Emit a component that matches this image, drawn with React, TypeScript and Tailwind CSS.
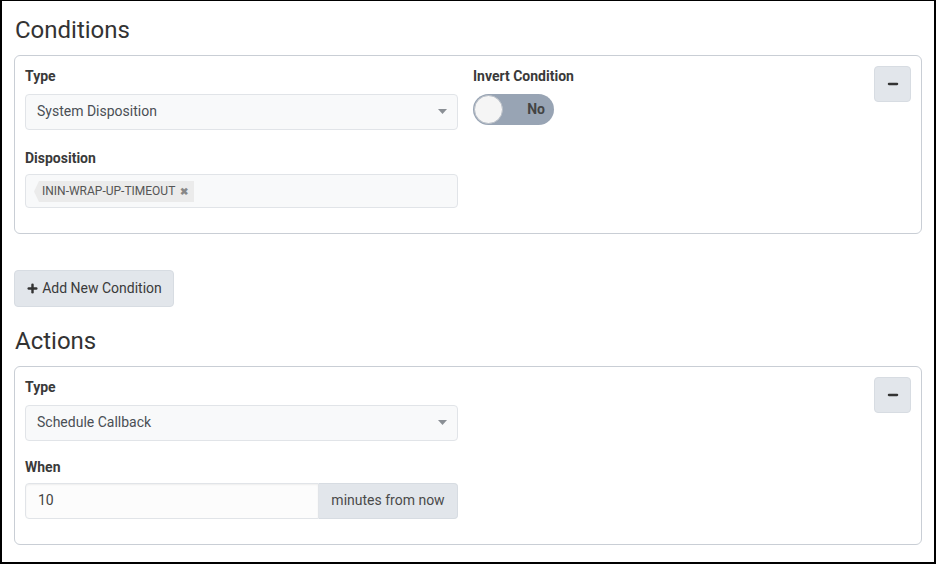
import { Plus, Minus } from "lucide-react";

// ─── Small pieces ─────────────────────────────────────────────────────────────
function Caret() {
  return (
    <svg width="9" height="5" viewBox="0 0 9 5" className="ml-auto">
      <path d="M0 0h9L4.5 5z" fill="#8a8f95" />
    </svg>
  );
}

function Select({ value }: { value: string }) {
  return (
    <div className="flex h-[36px] w-[433px] items-center rounded-[4px] border border-[#e1e4e8] bg-[#f8f9fa] pb-[2px] pl-[11px] pr-[10px] text-[14px] text-[#4a4f55]">
      <span>{value}</span>
      <Caret />
    </div>
  );
}

function RemoveButton() {
  return (
    <button className="flex h-[36px] w-[37px] items-center justify-center rounded-[4px] border border-[#d7dce2] bg-[#e2e6eb]">
      <Minus size={14} strokeWidth={4} className="text-[#333]" />
    </button>
  );
}

function Label({ children, className = "" }: { children: string; className?: string }) {
  return (
    <div className={`text-[14px] font-bold leading-[20px] text-[#3a3a3a] ${className}`}>
      {children}
    </div>
  );
}

function Toggle() {
  return (
    <div className="relative flex h-[31px] w-[81px] items-center rounded-full bg-[#98a4b4]">
      <div className="absolute left-[1px] top-[1px] h-[29px] w-[29px] rounded-full border border-[#b8bec6] bg-[#f5f5f5]" />
      <span className="ml-auto mr-[9px] text-[14px] font-bold text-[#444]">No</span>
    </div>
  );
}

function Tag({ text }: { text: string }) {
  return (
    <div className="flex h-[21px] items-center">
      <svg width="5" height="21" viewBox="0 0 5 21">
        <path d="M5 0v21L0 10.5z" fill="#ebebeb" />
      </svg>
      <div className="flex h-[21px] items-center gap-[5px] bg-[#ebebeb] pl-[3px] pr-[6px] text-[12px] text-[#555]">
        <span>{text}</span>
        <span className="text-[10px] font-bold text-[#888]">✖</span>
      </div>
    </div>
  );
}

// ─── Main component ───────────────────────────────────────────────────────────
export default function App() {
  return (
    <div
      className="h-[564px] w-[936px] overflow-hidden border-2 border-t border-black bg-white pl-[12px] pr-[12px] pt-[14px]"
      style={{ fontFamily: "Roboto, 'Open Sans', sans-serif" }}
    >
      {/* ── CONDITIONS ── */}
      <h2 className="mb-[10px] ml-[1px] text-[24px] leading-[30px] text-[#333]">Conditions</h2>

      <div className="flex rounded-[6px] border border-[#c9ced5] pb-[25px] pl-[10px] pr-[10px] pt-[10px]">
        <div className="w-[433px]">
          <Label className="mb-[8px]">Type</Label>
          <Select value="System Disposition" />
          <Label className="mb-[6px] mt-[18px]">Disposition</Label>
          <div className="flex h-[34px] items-center rounded-[4px] border border-[#e1e4e8] bg-[#f8f9fa] pl-[8px]">
            <Tag text="ININ-WRAP-UP-TIMEOUT" />
          </div>
        </div>
        <div className="ml-[15px]">
          <Label className="mb-[8px]">Invert Condition</Label>
          <Toggle />
        </div>
        <div className="ml-auto">
          <RemoveButton />
        </div>
      </div>

      <button className="mt-[36px] flex h-[37px] w-[160px] items-center justify-center gap-[3px] rounded-[4px] border border-[#d7dce2] bg-[#e2e6eb] pb-[1px] text-[14px] text-[#3a3a3a]">
        <Plus size={13} strokeWidth={4.5} className="text-[#333]" />
        Add New Condition
      </button>

      {/* ── ACTIONS ── */}
      <h2 className="mb-[10px] ml-[1px] mt-[19px] text-[24px] leading-[30px] text-[#333]">Actions</h2>

      <div className="flex rounded-[6px] border border-[#c9ced5] pb-[25px] pl-[10px] pr-[10px] pt-[10px]">
        <div className="w-[433px]">
          <Label className="mb-[8px]">Type</Label>
          <Select value="Schedule Callback" />
          <Label className="mb-[6px] mt-[16px]">When</Label>
          <div className="flex h-[36px]">
            <div className="flex w-[294px] items-center rounded-l-[4px] border border-[#e1e4e8] bg-[#fcfcfc] pb-[2px] pl-[12px] text-[14px] text-[#444] shadow-[inset_0_1px_2px_rgba(0,0,0,0.06)]">
              10
            </div>
            <div className="flex flex-1 items-center justify-center rounded-r-[4px] border border-l-0 border-[#d7dce2] bg-[#e2e6eb] pb-[2px] text-[14px] text-[#4a4a4a]">
              minutes from now
            </div>
          </div>
        </div>
        <div className="ml-auto">
          <RemoveButton />
        </div>
      </div>
    </div>
  );
}
